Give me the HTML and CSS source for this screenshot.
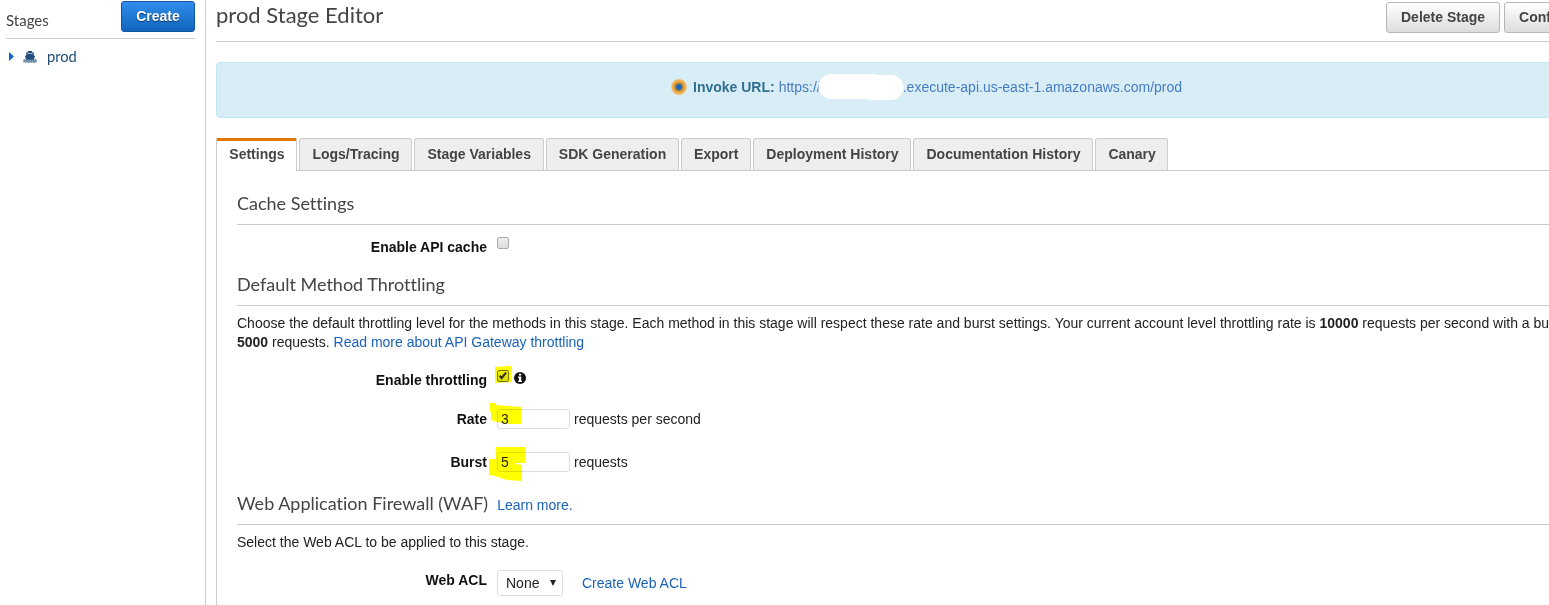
FILE: index.html
```html
<!DOCTYPE html>
<html lang="en">
<head>
<meta charset="utf-8">
<title>prod Stage Editor</title>
<link rel="stylesheet" href="styles.css">
</head>
<body>
<div class="app">
  <aside class="sidebar">
    <div class="sidebar-head"><span class="stages">Stages</span><button class="btn primary">Create</button></div>
    <div class="stage-item">
      <svg class="caret" width="5" height="9" viewBox="0 0 5 9"><path d="M0 0L5 4.5L0 9Z" fill="#1464c0"/></svg>
      <svg class="ship" width="14" height="12" viewBox="0 0 14 12"><path d="M5 0H9V1.2H10.7V4.2L12 5L10.8 9H3.2L2 5L3.3 4.2V1.2H5Z" fill="#1f4e79"/><path d="M4.6 2.1H9.4V3.3L7 2.7L4.6 3.3Z" fill="#b5c8d8"/><path d="M.3 9.5L1.6 8.7L3 9.5L4.4 8.7L5.7 9.5L7 8.7L8.3 9.5L9.7 8.7L11 9.5L12.3 8.7L13.7 9.5M.3 11.2L1.6 10.5L3 11.2L4.4 10.5L5.7 11.2L7 10.5L8.3 11.2L9.7 10.5L11 11.2L12.3 10.5L13.7 11.2" fill="none" stroke="#5b7d9b" stroke-width="1.2"/></svg>
      <span>prod</span>
    </div>
  </aside>
  <main class="main">
    <header class="title-bar">
      <h1>prod Stage Editor</h1>
      <div class="actions"><button class="btn">Delete Stage</button><button class="btn">Configure Tags</button></div>
    </header>
    <div class="invoke">
      <svg class="dot" width="16" height="16" viewBox="0 0 16 16"><circle cx="8" cy="8" r="7.7" fill="#f3af49"/><circle cx="8" cy="8" r="4.8" fill="#a48444"/><circle cx="8" cy="8" r="2.8" fill="#1464c0"/></svg>
      <b>Invoke URL:</b><span class="url">https://<svg class="redacted" width="86" height="26" viewBox="0 0 86 26"><path d="M13 0H52Q58 0 60 1H73A12.5 12.5 0 0 1 73 26H54Q50 26 48 25H13A12.5 12.5 0 0 1 13 0Z" fill="#fff"/></svg>.execute-api.us-east-1.amazonaws.com/prod</span>
    </div>
    <nav class="tabs">
      <a class="tab active">Settings</a><a class="tab">Logs/Tracing</a><a class="tab">Stage Variables</a><a class="tab">SDK Generation</a><a class="tab">Export</a><a class="tab">Deployment History</a><a class="tab">Documentation History</a><a class="tab">Canary</a>
    </nav>
    <div class="panel">
      <h2>Cache Settings</h2>
      <div class="row cache"><label>Enable API cache</label><span class="check"></span></div>
      <h2 class="throttle-head">Default Method Throttling</h2>
      <p class="desc">Choose the default throttling level for the methods in this stage. Each method in this stage will respect these rate and burst settings. Your current account level throttling rate is <b>10000</b> requests per second with a burst of<br><b>5000</b> requests. <a>Read more about API Gateway throttling</a></p>
      <div class="row throttle"><label>Enable throttling</label><span class="check checked"><svg width="12" height="12" viewBox="0 0 13 13"><path d="M2.8 6.3L5 8.7L9.8 2.9" fill="none" stroke="#333" stroke-width="2.3"/></svg><svg class="mark" width="17" height="17" viewBox="0 0 17 17"><path d="M0 1L16 0V15L17 16L0 17Z"/></svg></span>
        <svg class="info" width="12" height="12" viewBox="0 0 12 12"><circle cx="6" cy="6" r="6" fill="#111"/><path d="M5 1.7H7.2V3.6H5ZM4.2 4.6H7.2V8.7H8V10H4.2V8.7H5V5.9H4.2Z" fill="#fff"/></svg></div>
      <div class="row rate"><label>Rate</label><span class="input">3<svg class="mark mark-rate" width="31" height="22" viewBox="0 0 31 22"><path d="M0 0H6V2L18 3L31 4V21H20L7 19L1 17V9H0Z"/></svg></span><span>requests per second</span></div>
      <div class="row burst"><label>Burst</label><span class="input">5<svg class="mark mark-burst" width="36" height="34" viewBox="0 0 36 34"><path d="M7 0H36V16H27V17L33 18V34L18 33L12 31L6 29L0 28V12H7Z"/></svg></span><span>requests</span></div>
      <h2 class="waf">Web Application Firewall (WAF)<a>Learn more.</a></h2>
      <p class="select-text">Select the Web ACL to be applied to this stage.</p>
      <div class="row acl"><label>Web ACL</label><span class="select">None<svg width="6" height="6" viewBox="0 0 6 6"><path d="M0 0H6L3 6Z" fill="#222"/></svg></span><a>Create Web ACL</a></div>
    </div>
  </main>
</div>
</body>
</html>
```
FILE: styles.css
```css
* { box-sizing: border-box; }
body { margin: 0; overflow: hidden; background: #fff; color: #222; font: 14px/19px "Liberation Sans", Arial, sans-serif; font-variant-ligatures: none; }
.app { display: flex; width: 1640px; height: 605px; overflow: hidden; }
h1, h2, p { margin: 0; white-space: nowrap; }
h1, h2 { color: #444; font-family: Lato, sans-serif; font-weight: 400; }
a { color: #1a62b7; }
.btn { height: 31px; padding: 0 14px 1px; border: 1px solid #b7b7b7; border-radius: 3px; background: linear-gradient(#fff, #ddd); color: #444; font: bold 14px "Liberation Sans", Arial, sans-serif; white-space: nowrap; }
.btn.primary { width: 74px; border-color: #0f559e; background: linear-gradient(#2f8eea, #1264bd); color: #fff; text-shadow: 0 1px 1px #0a3566; }

.sidebar { width: 206px; padding: 1px 10px 0 6px; border-right: 1px solid #ccc; }
.sidebar-head { display: flex; justify-content: space-between; height: 38px; border-bottom: 1px solid #ccc; }
.stages { padding-top: 10px; color: #444; font-family: Lato, sans-serif; font-size: 15px; }
.stage-item { display: flex; align-items: center; height: 35px; padding-left: 3px; color: #1f4e79; font-family: Lato, sans-serif; font-size: 14.7px; }
.ship { margin: 0 10px 0 9px; }

.main { flex: 1; padding-left: 10px; }
.title-bar { display: flex; height: 42px; border-bottom: 1px solid #ccc; }
h1 { width: 1170px; font-size: 22px; line-height: 30px; }
.actions { display: flex; gap: 4px; padding-top: 2px; }
.invoke { display: flex; align-items: center; height: 56px; margin: 20px 0; padding: 0 0 6px 454px; border: 1px solid #bce8f1; border-radius: 4px; background: #d9edf7; color: #31708f; }
.dot { margin-right: 6px; }
.url { display: flex; align-items: center; margin-left: 4px; color: #447cc4; white-space: nowrap; }
.redacted { position: relative; margin-left: -3px; margin-right: -1px; }

.tabs { display: flex; gap: 2px; height: 33px; border-bottom: 1px solid #ccc; }
.tab { height: 32px; padding: 0 11.6px 0 12.3px; border: 1px solid #ccc; border-bottom: 0; border-radius: 3px 3px 0 0; background: #eee; color: #444; font-weight: bold; line-height: 31px; white-space: nowrap; }
.tab.active { height: 33px; border-top: 3px solid #e07700; border-radius: 2px 2px 0 0; background: #fff; line-height: 27px; }

.panel { height: 434px; padding: 20px 0 0 20px; border-left: 1px solid #ccc; }
h2 { height: 34px; border-bottom: 1px solid #ccc; font-size: 18px; line-height: 25px; }
.row { display: flex; align-items: center; }
.row label { width: 250px; margin-right: 10px; text-align: right; font-weight: bold; color: #111; }
.check { position: relative; width: 12px; height: 12px; border: 1px solid #aaa; border-radius: 2px; background: linear-gradient(#eee, #ddd); }
.check.checked { margin-right: 5px; border-color: #777; }
.check svg { position: absolute; left: -1px; top: -1px; }
.cache { height: 44px; }
.cache .check { margin-bottom: 9px; }
.throttle-head { height: 37px; line-height: 31px; }
.desc { padding-top: 8px; }
.throttle { height: 38px; margin-top: 9px; }
.throttle .check { margin-bottom: 9px; }
.throttle .info { margin-bottom: 5px; }
.rate { height: 40px; }
.burst { height: 46px; }
.input { position: relative; width: 73px; height: 20px; margin-right: 4px; padding-left: 3px; border: 1px solid #ddd; border-radius: 3px; line-height: 19px; }
.mark { position: absolute; fill: #ff0; mix-blend-mode: multiply; }
.check .mark { left: -3px; top: -5px; }
.mark-rate { left: -8px; top: -7px; }
.mark-burst { left: -9px; top: -6px; }
.waf { height: 40px; line-height: 37px; }
.waf a { margin-left: 9px; font-family: "Liberation Sans", Arial, sans-serif; font-size: 14px; }
.select-text { padding-top: 8px; }
.acl { margin-top: 18px; }
.acl label { margin-bottom: 6px; }
.select { display: flex; align-items: center; justify-content: space-between; width: 66px; height: 26px; margin-right: 19px; padding: 0 6px 0 8px; border: 1px solid #ddd; border-radius: 3px; }
```
